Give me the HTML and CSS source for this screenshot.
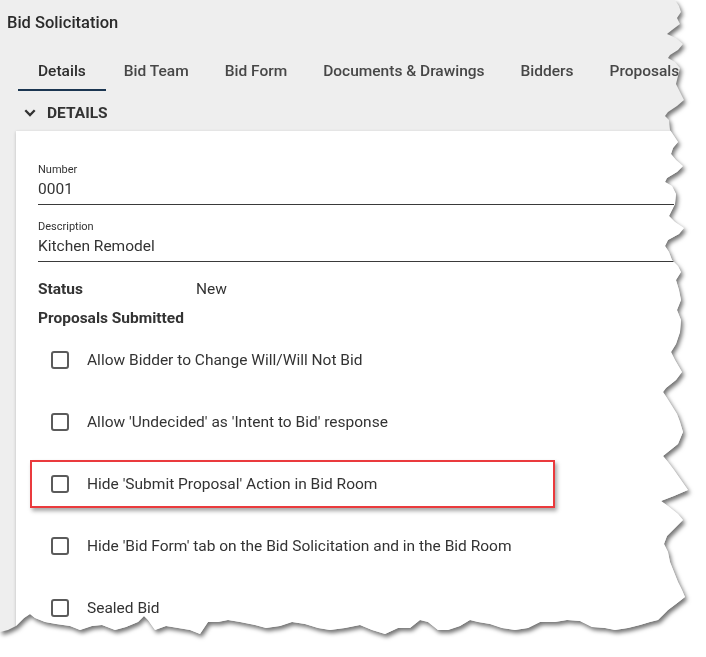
FILE: index.html
```html
<!DOCTYPE html>
<html lang="en">
<head>
<meta charset="utf-8">
<title>Bid Solicitation</title>
<link rel="stylesheet" href="styles.css">
</head>
<body>
<div class="paper">
  <div class="page">
    <header class="title">Bid Solicitation</header>
    <nav class="tabs">
      <div class="tab active">Details</div>
      <div class="tab">Bid Team</div>
      <div class="tab">Bid Form</div>
      <div class="tab">Documents &amp; Drawings</div>
      <div class="tab">Bidders</div>
      <div class="tab">Proposals</div>
    </nav>
    <div class="section-head">
      <svg class="chev" width="12" height="8" viewBox="0 0 12 8"><path d="M1.3 1.3 L6 6 L10.7 1.3" fill="none" stroke="#333" stroke-width="2.3"/></svg>
      <span>DETAILS</span>
    </div>
    <div class="card">
      <div class="field first">
        <div class="field-label">Number</div>
        <div class="field-value">0001</div>
      </div>
      <div class="field">
        <div class="field-label">Description</div>
        <div class="field-value">Kitchen Remodel</div>
      </div>
      <div class="info-row status">
        <span class="info-label">Status</span>
        <span class="info-value">New</span>
      </div>
      <div class="info-row proposals">
        <span class="info-label">Proposals Submitted</span>
      </div>
      <div class="checks">
        <label class="check"><span class="box"></span><span>Allow Bidder to Change Will/Will Not Bid</span></label>
        <label class="check"><span class="box"></span><span>Allow 'Undecided' as 'Intent to Bid' response</span></label>
        <label class="check highlighted"><span class="box"></span><span>Hide 'Submit Proposal' Action in Bid Room</span><span class="callout"></span></label>
        <label class="check"><span class="box"></span><span>Hide 'Bid Form' tab on the Bid Solicitation and in the Bid Room</span></label>
        <label class="check"><span class="box"></span><span>Sealed Bid</span></label>
      </div>
    </div>
  </div>
</div>
</body>
</html>
```

FILE: styles.css
```css
html, body {
  margin: 0;
  padding: 0;
  background: #ffffff;
}
body {
  width: 706px;
  height: 657px;
  overflow: hidden;
  font-family: Roboto, "Liberation Sans", Arial, sans-serif;
  color: #333;
}
.paper {
  width: 706px;
  height: 657px;
  filter: drop-shadow(2px 3px 2px rgba(0, 0, 0, 0.55));
}
.page {
  width: 706px;
  height: 657px;
  background: #eeeeee;
  overflow: hidden;
  clip-path: polygon(
    0 0, 675px 0, 679px 6px, 681px 12px, 677px 18px, 680px 24px, 672px 30px, 667px 34px, 676px 38px,
    683px 44px, 678px 50px, 670px 55px, 668px 58px, 675px 62px, 680px 68px, 678px 76px, 676px 84px,
    680px 92px, 684px 100px, 677px 106px, 668px 112px, 665px 116px, 669px 120px, 670px 130px,
    674px 136px, 678px 142px, 673px 148px, 671px 154px, 676px 160px, 683px 166px, 677px 172px,
    667px 178px, 665px 182px, 672px 186px, 676px 194px, 675px 204px, 672px 210px, 669px 216px,
    675px 222px, 684px 228px, 679px 234px, 668px 240px, 665px 246px, 669px 252px, 672px 260px,
    678px 266px, 681px 272px, 676px 280px, 679px 290px, 681px 300px, 677px 310px, 681px 320px,
    680px 332px, 676px 344px, 671px 352px, 675px 360px, 682px 372px, 676px 380px, 666px 388px,
    663px 392px, 667px 398px, 672px 406px, 677px 414px, 680px 422px, 683px 432px, 678px 444px,
    668px 452px, 663px 456px, 668px 462px, 674px 470px, 681px 480px, 688px 490px, 674px 496px,
    661px 501px, 668px 506px, 678px 514px, 683px 520px, 675px 528px, 667px 536px, 664px 544px,
    668px 552px, 670px 562px, 674px 572px, 678px 582px, 682px 590px, 685px 597px, 676px 604px,
    668px 610px, 662px 616px, 658px 620px,
    650px 622px, 640px 625px, 628px 628px, 615px 630px, 605px 628px, 592px 627px, 580px 621px,
    567px 620px, 555px 622px, 540px 622px, 528px 628px, 515px 630px, 502px 628px, 490px 624px,
    478px 622px, 470px 620px, 460px 626px, 448px 630px, 438px 630px, 428px 622px, 420px 620px,
    410px 628px, 398px 628px, 385px 634px, 372px 630px, 360px 625px, 345px 628px, 330px 630px,
    318px 628px, 305px 624px, 292px 622px, 280px 626px, 266px 628px, 255px 625px, 240px 622px,
    228px 620px, 218px 622px, 208px 622px, 200px 634px, 190px 630px, 178px 628px, 166px 626px,
    155px 630px, 148px 620px, 144px 616px, 138px 622px, 126px 627px, 115px 630px, 102px 625px,
    92px 626px, 80px 630px, 70px 626px, 56px 624px, 45px 622px, 35px 618px, 30px 614px,
    24px 618px, 16px 626px, 8px 630px, 0 632px
  );
}

/* header */
.title {
  padding: 13px 0 0 7px;
  height: 38px;
  line-height: 19px;
  font-size: 16.5px;
  font-weight: 500;
  color: #2b2b2b;
}

/* tabs */
.tabs {
  display: flex;
  padding-left: 20px;
  height: 40px;
  white-space: nowrap;
}
.tab {
  padding: 1px 18px 0;
  line-height: 38px;
  font-size: 15.5px;
  font-weight: 500;
  color: #474747;
  border-bottom: 2px solid transparent;
}
.tab.active {
  color: #2d2d2d;
  border-bottom-color: #1b3651;
  margin-left: -2px;
  padding: 1px 20px 0;
}

/* section header */
.section-head {
  display: flex;
  align-items: center;
  height: 36px;
  padding: 4px 0 0 24px;
  font-size: 15.5px;
  font-weight: 700;
  color: #333;
}
.chev {
  margin-right: 11px;
}

/* card */
.card {
  margin-left: 16px;
  width: 720px;
  height: 560px;
  background: #ffffff;
  box-shadow: 0 1px 3px rgba(0, 0, 0, 0.22);
  padding: 32px 0 0 22px;
  box-sizing: border-box;
}
.field {
  width: 636px;
  margin-top: 15px;
  border-bottom: 1px solid #3a3a3a;
  padding-bottom: 6px;
}
.field.first {
  margin-top: 0;
}
.field-label {
  font-size: 11px;
  line-height: 13px;
  color: #333;
}
.field-value {
  margin-top: 4px;
  font-size: 15.5px;
  line-height: 18px;
  color: #333;
}
.info-row {
  display: flex;
  font-size: 15.5px;
  line-height: 20px;
}
.info-row.status {
  margin-top: 17px;
}
.info-row.proposals {
  margin-top: 9px;
}
.info-label {
  font-weight: 700;
  color: #333;
  width: 158px;
  white-space: nowrap;
}
.info-value {
  color: #333;
}

/* checkboxes */
.checks {
  margin-top: 8px;
  display: flex;
  flex-direction: column;
  gap: 14px;
}
.check {
  position: relative;
  display: flex;
  align-items: center;
  height: 48px;
  padding-left: 13px;
  font-size: 15.5px;
  color: #333;
}
.box {
  width: 14px;
  height: 14px;
  border: 2px solid #5b5b5b;
  border-radius: 3px;
  margin-right: 18px;
  flex: none;
}
.callout {
  position: absolute;
  left: -8px;
  top: 0;
  width: 521px;
  height: 44px;
  border: 2px solid #ea3a3d;
  box-shadow: 2px 3px 4px rgba(0, 0, 0, 0.35);
}
```
